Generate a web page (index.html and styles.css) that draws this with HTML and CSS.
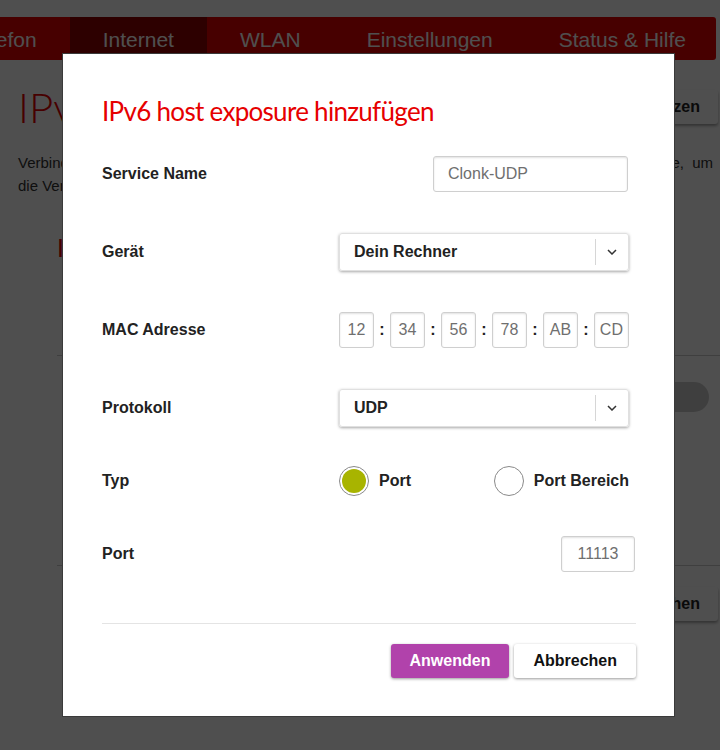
FILE: index.html
```html
<!DOCTYPE html>
<html lang="de">
<head>
	<meta charset="UTF-8">
	<title>IPv6 host exposure</title>
	<link rel="stylesheet" href="styles.css">
</head>
<body>
	<div class="page">
		<div class="nav">
			<ul>
				<li>Telefon</li>
				<li class="active">Internet</li>
				<li>WLAN</li>
				<li>Einstellungen</li>
				<li>Status &amp; Hilfe</li>
			</ul>
		</div>
		<div class="content">
			<div class="head">
				<h1>IPv6 host exposure</h1>
				<a href="javascript:;" class="pageBtn">Zurücksetzen</a>
			</div>
			<p class="intro">
				<span class="line1">Verbindungen aus dem Internet erlaubst du hier. Wähle dafür ein neues Gerät aus der Liste, um</span>
				die Verbindung freizugeben.
			</p>
			<h2>IPv6 host exposure Regeln</h2>
			<div class="ruleRow">
				<span class="toggle"><span class="knob"></span></span>
			</div>
			<div class="footRow">
				<a href="javascript:;" class="pageBtn">Löschen</a>
			</div>
		</div>
	</div>

	<div class="mask"></div>

	<div class="modal">
		<h3>IPv6 host exposure hinzufügen</h3>
		<div class="row">
			<label>Service Name</label>
			<div class="field right">
				<input type="text" class="textIn" value="Clonk-UDP">
			</div>
		</div>
		<div class="row">
			<label>Gerät</label>
			<div class="field">
				<div class="select">
					<span class="val">Dein Rechner</span>
					<span class="arrow"><svg width="10" height="6" viewBox="0 0 10 6"><path d="M1 1l4 4 4-4" fill="none" stroke="#333" stroke-width="1.5"/></svg></span>
				</div>
			</div>
		</div>
		<div class="row">
			<label>MAC Adresse</label>
			<div class="field mac">
				<span class="macBox">12</span><b>:</b>
				<span class="macBox">34</span><b>:</b>
				<span class="macBox">56</span><b>:</b>
				<span class="macBox">78</span><b>:</b>
				<span class="macBox">AB</span><b>:</b>
				<span class="macBox">CD</span>
			</div>
		</div>
		<div class="row">
			<label>Protokoll</label>
			<div class="field">
				<div class="select">
					<span class="val">UDP</span>
					<span class="arrow"><svg width="10" height="6" viewBox="0 0 10 6"><path d="M1 1l4 4 4-4" fill="none" stroke="#333" stroke-width="1.5"/></svg></span>
				</div>
			</div>
		</div>
		<div class="row short">
			<label>Typ</label>
			<div class="field radios">
				<span class="radio"><i class="dot on"></i>Port</span>
				<span class="radio"><i class="dot"></i>Port Bereich</span>
			</div>
		</div>
		<div class="row">
			<label>Port</label>
			<div class="field right">
				<input type="text" class="portIn" value="11113">
			</div>
		</div>
		<div class="btns">
			<a href="javascript:;" class="btn primary">Anwenden</a>
			<a href="javascript:;" class="btn">Abbrechen</a>
		</div>
	</div>
</body>
</html>
```

FILE: styles.css
```css
*{
	margin: 0;
	padding: 0;
	box-sizing: border-box;
}
body{
	background-color: #fff;
	font-family: "Liberation Sans", Arial, sans-serif;
	color: #222;
	overflow: hidden;
}
a{
	text-decoration: none;
}

/* page behind the dialog */
.page{
	width: 720px;
	height: 750px;
	padding-top: 17px;
}
.nav{
	width: 716px;
	height: 43px;
	background-color: #e60000;
	border-radius: 0 3px 3px 0;
	overflow: hidden;
}
.nav ul{
	list-style: none;
	display: flex;
	margin-left: -64px;
}
.nav li{
	padding: 3px 33px 0;
	height: 43px;
	line-height: 40px;
	font-size: 21px;
	color: #fff;
	white-space: nowrap;
}
.nav li.active{
	background-color: #900000;
}
.content{
	padding: 0 2px 0 18px;
}
.head{
	display: flex;
	justify-content: space-between;
	align-items: center;
	margin-top: 30px;
	height: 34px;
}
.head h1{
	font-family: Lato, sans-serif;
	font-weight: 300;
	font-size: 42px;
	color: #e60000;
	line-height: 34px;
}
.pageBtn{
	display: inline-block;
	height: 34px;
	line-height: 34px;
	padding: 0 18px;
	font-weight: bold;
	font-size: 16px;
	color: #222;
	background-color: #fff;
	border-radius: 3px;
	box-shadow: 0 2px 3px rgba(0,0,0,.35);
}
.intro{
	margin-top: 27px;
	margin-right: 5px;
	font-size: 15px;
	line-height: 23px;
	color: #333;
}
.intro .line1{
	display: block;
	text-align: justify;
	text-align-last: justify;
}
.content h2{
	margin: 38px 0 0 39px;
	font-family: Lato, sans-serif;
	font-weight: 400;
	font-size: 25px;
	color: #e60000;
	line-height: 24px;
}
.ruleRow{
	margin: 96px -2px 0 39px;
	height: 211px;
	border-top: 1px solid #ccc;
	border-bottom: 1px solid #ccc;
	padding-top: 26px;
	display: flex;
	justify-content: flex-end;
}
.toggle{
	display: block;
	width: 80px;
	height: 30px;
	margin-right: 11px;
	border-radius: 15px;
	background-color: #ccc;
	position: relative;
}
.toggle .knob{
	position: absolute;
	left: 10px;
	top: 2px;
	width: 26px;
	height: 26px;
	border-radius: 50%;
	background-color: #e6e6e6;
}
.footRow{
	display: flex;
	justify-content: flex-end;
	margin-top: 21px;
}

/* dark layer over the page */
.mask{
	position: fixed;
	top: 0;
	left: 0;
	right: 0;
	bottom: 0;
	background-color: rgba(0,0,0,.69);
}

/* dialog */
.modal{
	position: absolute;
	left: 62px;
	top: 53px;
	width: 613px;
	height: 664px;
	background-color: #fff;
	border: 1px solid #3a3a3a;
	padding: 41px 38px 0 39px;
}
.modal h3{
	font-family: Lato, sans-serif;
	font-weight: 400;
	font-size: 26px;
	letter-spacing: -0.7px;
	line-height: 32px;
	color: #e60000;
	margin-bottom: 27px;
}
.row{
	display: flex;
	align-items: center;
	height: 40px;
	margin-bottom: 38px;
}
.row.short{
	height: 30px;
}
.row label{
	width: 237px;
	font-weight: bold;
	font-size: 16px;
	color: #222;
}
.field{
	width: 290px;
}
.field.right{
	display: flex;
	justify-content: flex-end;
}
.textIn,
.portIn,
.macBox{
	height: 36px;
	border: 1px solid #cfcfcf;
	border-radius: 3px;
	box-shadow: inset 0 1px 2px rgba(0,0,0,.12);
	font-family: "Liberation Sans", Arial, sans-serif;
	font-size: 16px;
	color: #6f6f6f;
	background: #fff;
}
.textIn{
	width: 195px;
	padding-left: 14px;
	margin-right: 1px;
}
.portIn{
	width: 74px;
	text-align: center;
	margin-right: -6px;
}
.select{
	display: flex;
	align-items: center;
	height: 38px;
	border: 1px solid #e0e0e0;
	border-radius: 3px;
	box-shadow: 0 1px 3px rgba(0,0,0,.35);
}
.select .val{
	flex: 1;
	padding-left: 14px;
	font-weight: bold;
	font-size: 16px;
	color: #222;
}
.select .arrow{
	width: 33px;
	height: 26px;
	border-left: 1px solid #d6d6d6;
	display: flex;
	align-items: center;
	justify-content: center;
}
.mac{
	display: flex;
	justify-content: space-between;
	align-items: center;
}
.macBox{
	width: 35px;
	line-height: 34px;
	text-align: center;
}
.mac b{
	font-size: 16px;
	color: #222;
}
.radios{
	display: flex;
	justify-content: space-between;
}
.radio{
	display: flex;
	align-items: center;
	font-weight: bold;
	font-size: 16px;
	color: #222;
}
.dot{
	display: block;
	width: 30px;
	height: 30px;
	margin-right: 10px;
	border: 1px solid #8a8a8a;
	border-radius: 50%;
	padding: 2px;
	background-clip: content-box;
}
.dot.on{
	background-color: #a8b400;
}
.btns{
	margin-top: 49px;
	border-top: 1px solid #e4e4e4;
	padding-top: 20px;
	display: flex;
	justify-content: flex-end;
	gap: 5px;
}
.btn{
	display: block;
	height: 34px;
	line-height: 34px;
	padding: 0 19px;
	border-radius: 3px;
	font-weight: bold;
	font-size: 16px;
	color: #111;
	background: #fff;
	box-shadow: 0 1px 3px rgba(0,0,0,.4);
}
.btn.primary{
	background-color: #b142ab;
	color: #fff;
}
```
